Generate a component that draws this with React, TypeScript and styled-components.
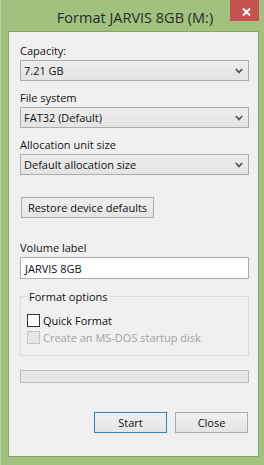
import React from 'react';
import styled, { createGlobalStyle } from 'styled-components';

const Global = createGlobalStyle`
  html, body { margin: 0; padding: 0; background: #a0c27e; }
  body { font-family: "Open Sans", "Noto Sans", sans-serif; }
`;

const Window = styled.div`
  width: 264px;
  height: 465px;
  box-sizing: border-box;
  background: #a0c27e;
  border-left: 1px solid #b9cba4;
  padding-bottom: 8px;
  display: flex;
  flex-direction: column;
`;

const TitleBar = styled.div`
  height: 31px;
  flex: none;
  display: grid;
  grid-template-columns: 1fr auto 1fr;
  padding: 0 5px 0 10px;
`;

const Title = styled.div`
  grid-column: 2;
  align-self: center;
  font-size: 14.5px;
  line-height: 20px;
  color: #2a2a2a;
  white-space: nowrap;
  margin-top: 4px;
`;

const CloseBtn = styled.div`
  grid-column: 3;
  justify-self: end;
  align-self: start;
  width: 29px;
  height: 21px;
  background: #c75050;
  display: flex;
  align-items: center;
  justify-content: center;
  padding: 2px 0 0 3px;
  box-sizing: border-box;
`;

const Panel = styled.div`
  flex: 1;
  margin: 0 5px 0 7px;
  background: #f0f0f0;
  border: 1px solid #84a862;
  padding: 11px 9px 0 11px;
  display: flex;
  flex-direction: column;
  font-size: 11px;
  color: #111;
`;

const Label = styled.div`
  line-height: 15px;
  margin-bottom: 2px;
`;

const Combo = styled.div`
  height: 21px;
  box-sizing: border-box;
  border: 1px solid #acacac;
  background: linear-gradient(#ececec, #e4e4e4);
  display: flex;
  align-items: center;
  justify-content: space-between;
  padding: 0 5px 0 3px;
  margin-bottom: 9px;
  line-height: 15px;
`;

const PushButton = styled.div<{ $primary?: boolean; $width: number }>`
  width: ${p => p.$width}px;
  height: 21px;
  box-sizing: border-box;
  border: 1px solid ${p => (p.$primary ? '#3c7fb1' : '#acacac')};
  background: linear-gradient(#f0f0f0, #e5e5e5);
  display: flex;
  align-items: center;
  justify-content: center;
  line-height: 15px;
`;

const RestoreRow = styled.div`
  margin-top: 13px;
  margin-left: 1px;
  margin-bottom: 22px;
  display: flex;
`;

const TextInput = styled.div`
  height: 22px;
  box-sizing: border-box;
  border: 1px solid #abadb3;
  background: #fff;
  display: flex;
  align-items: center;
  padding: 0 4px;
  line-height: 15px;
`;

const Group = styled.fieldset`
  margin: 10px 0 0 0;
  padding: 0 6px 9px 6px;
  border: 1px solid #dcdcdc;
  min-inline-size: 0;
  display: flex;
  flex-direction: column;
`;

const Legend = styled.legend`
  padding: 0 2px;
  line-height: 15px;
`;

const CheckRow = styled.div<{ $disabled?: boolean }>`
  display: flex;
  align-items: center;
  height: 17px;
  color: ${p => (p.$disabled ? '#a0a0a0' : '#111')};
  &:first-of-type { margin-top: 8px; }
`;

const Box = styled.span<{ $disabled?: boolean }>`
  width: 13px;
  height: 13px;
  box-sizing: border-box;
  border: 1px solid ${p => (p.$disabled ? '#c4c4c4' : '#333')};
  background: ${p => (p.$disabled ? '#e6e6e6' : '#fff')};
  margin-right: 3px;
  flex: none;
`;

const Progress = styled.div`
  margin-top: 14px;
  height: 13px;
  box-sizing: border-box;
  border: 1px solid #bcbcbc;
  background: #e6e6e6;
`;

const ButtonRow = styled.div`
  margin-top: 29px;
  display: flex;
  justify-content: flex-end;
  gap: 8px;
  padding-right: 1px;
`;

const Chevron = () => (
  <svg width="8" height="6" viewBox="0 0 8 6">
    <polyline points="0.8,1 4,4.4 7.2,1" fill="none" stroke="#555" strokeWidth="1.8" />
  </svg>
);

const CloseX = () => (
  <svg width="9" height="8" viewBox="0 0 9 8">
    <path d="M1 0.5 L8 7.5 M8 0.5 L1 7.5" stroke="#fff" strokeWidth="1.9" />
  </svg>
);

const fields = [
  { label: 'Capacity:', value: '7.21 GB' },
  { label: 'File system', value: 'FAT32 (Default)' },
  { label: 'Allocation unit size', value: 'Default allocation size' },
];

export default function App() {
  return (
    <>
      <Global />
      <Window>
        <TitleBar>
          <Title>Format JARVIS 8GB (M:)</Title>
          <CloseBtn><CloseX /></CloseBtn>
        </TitleBar>
        <Panel>
          {fields.map(f => (
            <React.Fragment key={f.label}>
              <Label>{f.label}</Label>
              <Combo>
                <span>{f.value}</span>
                <Chevron />
              </Combo>
            </React.Fragment>
          ))}
          <RestoreRow>
            <PushButton $width={133}>Restore device defaults</PushButton>
          </RestoreRow>
          <Label>Volume label</Label>
          <TextInput>JARVIS 8GB</TextInput>
          <Group>
            <Legend>Format options</Legend>
            <CheckRow><Box />Quick Format</CheckRow>
            <CheckRow $disabled><Box $disabled />Create an MS-DOS startup disk</CheckRow>
          </Group>
          <Progress />
          <ButtonRow>
            <PushButton $primary $width={73}>Start</PushButton>
            <PushButton $width={73}>Close</PushButton>
          </ButtonRow>
        </Panel>
      </Window>
    </>
  );
}
